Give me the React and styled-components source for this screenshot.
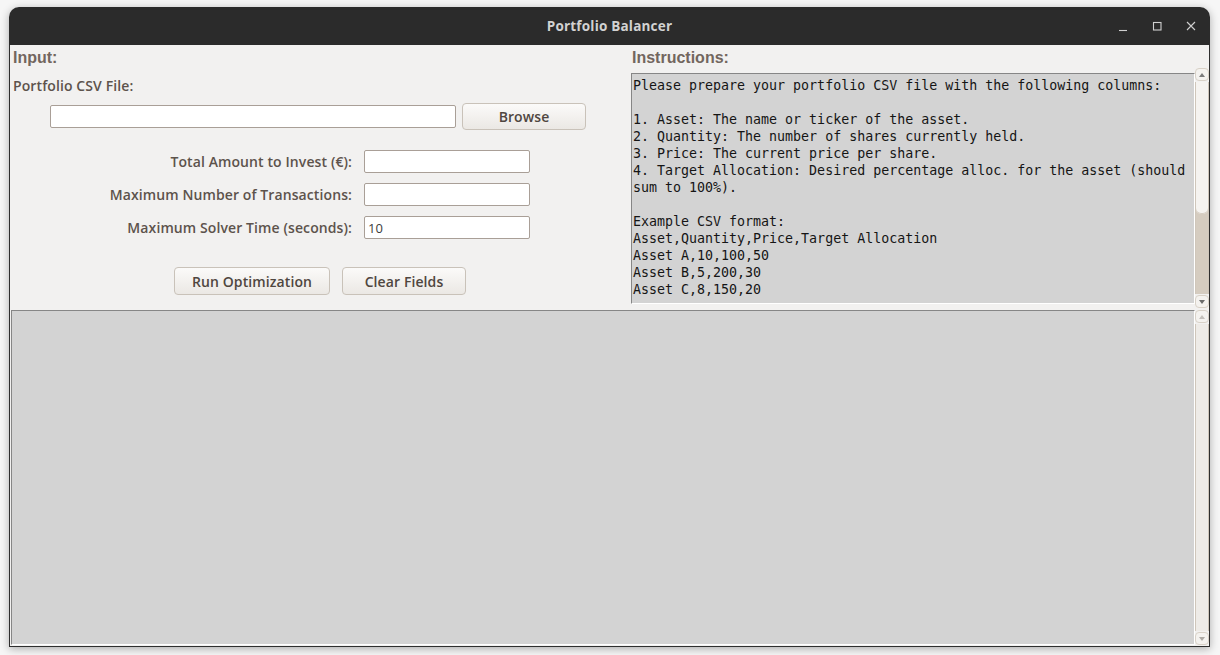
import React from "react";
import styled, { createGlobalStyle } from "styled-components";

const GlobalStyle = createGlobalStyle`
  html, body { margin: 0; padding: 0; }
  body {
    background: #f6f6f6;
    overflow: hidden;
    font-family: "Open Sans", "Noto Sans", sans-serif;
  }
`;

const Desktop = styled.div`
  width: 1220px;
  height: 655px;
  padding: 7px 0 0 9px;
  box-sizing: border-box;
`;

const Window = styled.div`
  width: 1201px;
  height: 640px;
  display: flex;
  flex-direction: column;
  border-radius: 10px 10px 0 0;
  box-shadow: 0 2px 9px rgba(0, 0, 0, 0.3);
`;

const TitleBar = styled.div`
  height: 38px;
  flex: none;
  background: #2b2b2b;
  border-radius: 10px 10px 0 0;
  display: grid;
  grid-template-columns: 1fr auto 1fr;
  align-items: center;
`;

const Title = styled.div`
  grid-column: 2;
  font-family: "Open Sans", "Noto Sans", sans-serif;
  font-weight: 700;
  font-size: 13.5px;
  color: #d2d2d2;
  letter-spacing: 0.2px;
`;

const Controls = styled.div`
  grid-column: 3;
  justify-self: end;
  display: flex;
  align-items: center;
  gap: 18px;
  padding-right: 11px;
`;

const CtrlIcon = styled.svg`
  width: 16px;
  height: 16px;
  display: block;
  stroke: #d0d0d0;
  fill: none;
  stroke-width: 1.1;
`;

const Body = styled.div`
  flex: 1;
  display: flex;
  flex-direction: column;
  background: #f2f1f0;
  border: 1px solid #2e2e2e;
  border-top: none;
  min-height: 0;
`;

const TopSection = styled.div`
  height: 264px;
  flex: none;
  display: flex;
`;

const LeftPanel = styled.div`
  width: 616px;
  flex: none;
  display: flex;
  flex-direction: column;
  padding-top: 3px;
  box-sizing: border-box;
`;

const RightPanel = styled.div`
  flex: 1;
  display: flex;
  flex-direction: column;
  padding-left: 5px;
  padding-top: 3px;
  min-width: 0;
`;

const Heading = styled.div`
  font-family: "Liberation Sans", Arial, sans-serif;
  font-weight: 700;
  font-size: 16px;
  line-height: 19px;
  height: 19px;
  color: #72665e;
  padding-left: ${(p) => p.$indent || 0}px;
`;

const FieldLabel = styled.div`
  font-family: "Open Sans", "Noto Sans", sans-serif;
  font-weight: 600;
  font-size: 14px;
  letter-spacing: 0.1px;
  line-height: 17px;
  color: #5d534c;
  white-space: nowrap;
  text-align: ${(p) => p.$align || "left"};
`;

const FileLabel = styled(FieldLabel)`
  margin-top: 10px;
  padding-left: 3px;
`;

const FileRow = styled.div`
  margin-top: 9px;
  display: flex;
  align-items: center;
  justify-content: center;
  gap: 6px;
  height: 27px;
`;

const TextInput = styled.input`
  box-sizing: border-box;
  width: ${(p) => p.$w}px;
  height: 23px;
  border: 1px solid #a99f97;
  border-radius: 2px;
  background: #ffffff;
  padding: 0 3px;
  font-family: "Open Sans", "Noto Sans", sans-serif;
  font-size: 13px;
  color: #3c3c3c;
  outline: none;
`;

const Button = styled.button`
  box-sizing: border-box;
  width: ${(p) => p.$w}px;
  height: ${(p) => p.$h || 28}px;
  border: 1px solid #c9c2b9;
  border-radius: 4px;
  background: linear-gradient(#fbfaf9, #ebe8e4);
  font-family: "Open Sans", "Noto Sans", sans-serif;
  font-weight: 600;
  font-size: 14px;
  letter-spacing: 0.1px;
  color: #4f4640;
  padding: 0;
  cursor: pointer;
`;

const FormGrid = styled.div`
  margin-top: 20px;
  display: grid;
  grid-template-columns: 246px 166px;
  column-gap: 12px;
  row-gap: 10px;
  justify-content: center;
  align-items: center;
`;

const ButtonRow = styled.div`
  margin-top: 28px;
  display: flex;
  justify-content: center;
  gap: 12px;
  padding-left: 4px;
`;

const ScrollPane = styled.div`
  flex: 1;
  display: flex;
  min-height: 0;
  margin-top: ${(p) => p.$mt || 0}px;
  margin-bottom: ${(p) => p.$mb || 0}px;
`;

const TextArea = styled.div`
  flex: 1;
  min-width: 0;
  background: #d3d3d3;
  border: 1px solid;
  border-color: #868686 #ffffff #ffffff #868686;
  margin: ${(p) => p.$m || "0"};
  padding: 3px 1px 0;
  font-family: "DejaVu Sans Mono", "Liberation Mono", monospace;
  font-size: 13.3px;
  line-height: 17px;
  color: #151515;
  white-space: pre;
  overflow: hidden;
`;

const ScrollBar = styled.div`
  width: 14px;
  flex: none;
  display: flex;
  flex-direction: column;
  gap: 1px;
`;

const ArrowBtn = styled.div`
  height: 13px;
  flex: none;
  box-sizing: border-box;
  border: 1px solid #d8d1c7;
  border-radius: 4px;
  background: #f4f2ef;
  display: flex;
  align-items: center;
  justify-content: center;
  &::after {
    content: "";
    width: 0;
    height: 0;
    border-left: 3.5px solid transparent;
    border-right: 3.5px solid transparent;
    ${(p) =>
      p.$dir === "up"
        ? `border-bottom: 4px solid ${p.$color};`
        : `border-top: 4px solid ${p.$color};`}
  }
`;

const Track = styled.div`
  flex: 1;
  box-sizing: border-box;
  border-left: 1px solid #cfc6ba;
  border-right: 1px solid #cfc6ba;
  background: ${(p) => (p.$tan ? "#d5ccc0" : "#eeebe7")};
  display: flex;
  flex-direction: column;
`;

const Thumb = styled.div`
  height: ${(p) => p.$h}px;
  flex: none;
  background: #f5f3f0;
  border-radius: 0 0 5px 5px;
  box-shadow: inset 0 -1px 0 #d6cec3;
`;

const BottomPane = styled.div`
  flex: 1;
  display: flex;
  padding: 1px 0 1px 1px;
  min-height: 0;
`;

const instructions = `Please prepare your portfolio CSV file with the following columns:

1. Asset: The name or ticker of the asset.
2. Quantity: The number of shares currently held.
3. Price: The current price per share.
4. Target Allocation: Desired percentage alloc. for the asset (should
sum to 100%).

Example CSV format:
Asset,Quantity,Price,Target Allocation
Asset A,10,100,50
Asset B,5,200,30
Asset C,8,150,20`;

function Scroller({ thumb, tan, dark }) {
  return (
    <ScrollBar>
      <ArrowBtn $dir="up" $color={dark ? "#7b7b7b" : "#c4c0bb"} />
      <Track $tan={tan}>{thumb ? <Thumb $h={thumb} /> : null}</Track>
      <ArrowBtn $dir="down" $color={dark ? "#6b6b6b" : "#aeaaa5"} />
    </ScrollBar>
  );
}

export default function App() {
  return (
    <>
      <GlobalStyle />
      <Desktop>
        <Window>
          <TitleBar>
            <Title>Portfolio Balancer</Title>
            <Controls>
              <CtrlIcon viewBox="0 0 16 16">
                <path d="M4 12.5h8" />
              </CtrlIcon>
              <CtrlIcon viewBox="0 0 16 16">
                <rect x="4.5" y="4.5" width="7.5" height="7.5" />
              </CtrlIcon>
              <CtrlIcon viewBox="0 0 16 16">
                <path d="M4 4l8 8M12 4l-8 8" />
              </CtrlIcon>
            </Controls>
          </TitleBar>
          <Body>
            <TopSection>
              <LeftPanel>
                <Heading $indent={3}>Input:</Heading>
                <FileLabel>Portfolio CSV File:</FileLabel>
                <FileRow>
                  <TextInput $w={406} />
                  <Button $w={124} $h={27}>Browse</Button>
                </FileRow>
                <FormGrid>
                  <FieldLabel $align="right">Total Amount to Invest (€):</FieldLabel>
                  <TextInput $w={166} />
                  <FieldLabel $align="right">Maximum Number of Transactions:</FieldLabel>
                  <TextInput $w={166} />
                  <FieldLabel $align="right">Maximum Solver Time (seconds):</FieldLabel>
                  <TextInput $w={166} defaultValue="10" />
                </FormGrid>
                <ButtonRow>
                  <Button $w={156}>Run Optimization</Button>
                  <Button $w={124}>Clear Fields</Button>
                </ButtonRow>
              </LeftPanel>
              <RightPanel>
                <Heading $indent={1}>Instructions:</Heading>
                <ScrollPane $mt={1} $mb={1}>
                  <TextArea $m="5px 0 4px 0">{instructions}</TextArea>
                  <Scroller thumb={132} tan dark />
                </ScrollPane>
              </RightPanel>
            </TopSection>
            <BottomPane>
              <TextArea $m="0" />
              <Scroller />
            </BottomPane>
          </Body>
        </Window>
      </Desktop>
    </>
  );
}
